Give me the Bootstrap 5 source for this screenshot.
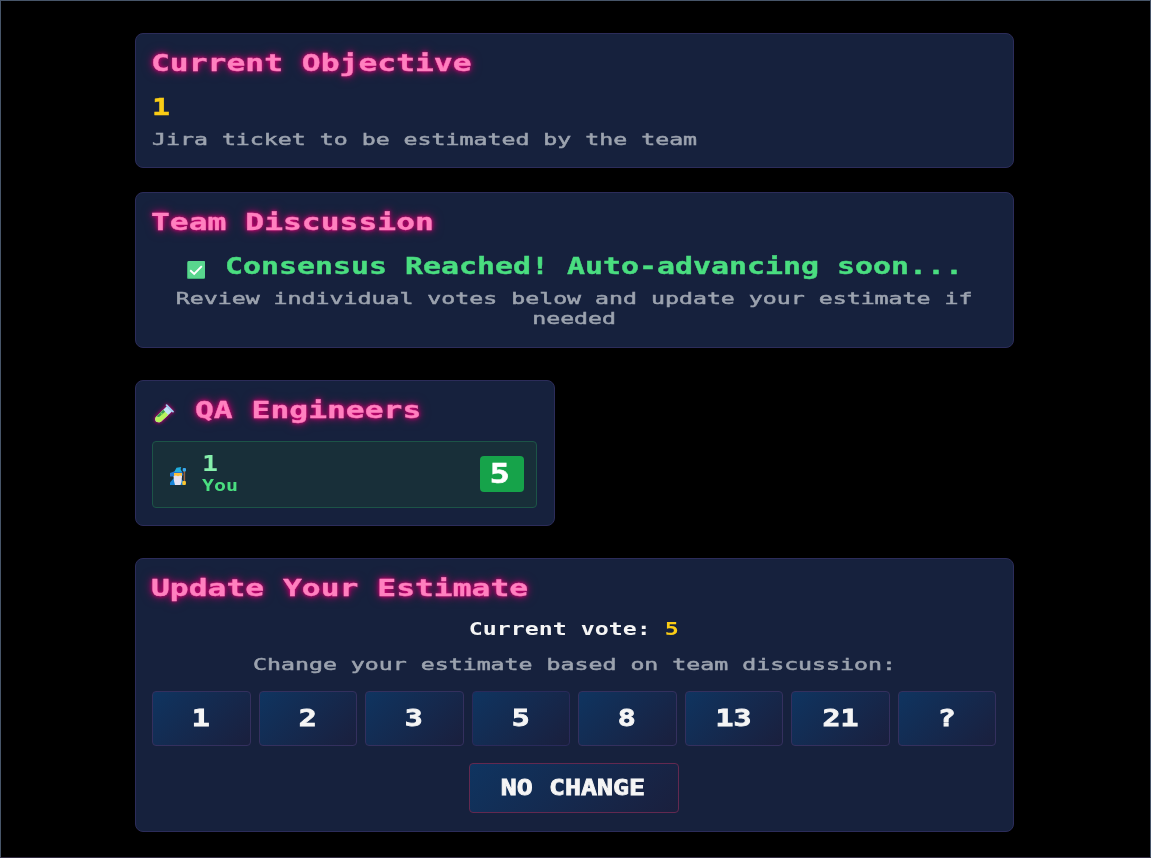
<!DOCTYPE html>
<html lang="en">
<head>
<meta charset="utf-8">
<meta name="viewport" content="width=device-width, initial-scale=1">
<title>Team Discussion</title>
<link href="https://cdn.jsdelivr.net/npm/bootstrap@5.3.0/dist/css/bootstrap.min.css" rel="stylesheet">
<style>
body{background:#000;color:#f5f5f5;font-family:"DejaVu Sans Mono",monospace;overflow:hidden}
.screen{height:858px;border:1px solid #475569;border-bottom-color:#332d42;padding:32px 136px 0 134px}
.panel{background:#16213d;border:1px solid #2c2c5a;border-radius:8px;padding:16px 17px 16px 16px;color:#f5f5f5}
.panel-goal{height:135px}
.panel-talk{height:156px}
.panel-qa{height:146px;width:419.5px}
.panel-vote{height:273.5px}
/* wide arcade lettering */
.wide{display:inline-block;white-space:nowrap;transform:scaleX(var(--w));transform-origin:center}
.wide-start{transform-origin:left center}
.glow{font-size:22.5px;line-height:27px;font-weight:700;color:#ff80bf;--w:1.392;-webkit-text-stroke:.3px currentColor;text-shadow:0 0 3px #e6007a,0 0 6px #c4006c,0 0 10px #8c0c5c}
.title-row{display:flex;margin-left:-1px;height:27px}
.big{font-size:22.5px;line-height:26px;font-weight:700;--w:1.329;-webkit-text-stroke:.4px currentColor}
.note{font-size:16.5px;line-height:20px;color:#9ca3af;--w:1.407;-webkit-text-stroke:.5px currentColor}
.vote-line{font-size:17px;line-height:24px;font-weight:700;--w:1.368}
.gold{color:#facc15}
.green{color:#4ade80}
.line{display:flex}
.member{height:67px;margin-top:17px;background:#182f39;border:1px solid #1c5447;border-radius:4px;padding:0 12px 0 17px}
.member-name{font-size:21px;line-height:24px;font-weight:700;color:#86efac;--w:1.266}
.member-you{font-size:15px;line-height:20px;font-weight:700;color:#4ade80;--w:1.33}
.score{width:44px;height:36px;background:#16a34a;border-radius:4px;font-size:26px;font-weight:700;line-height:36px;color:#fff;--w:1.28;-webkit-text-stroke:.6px currentColor;margin-top:-2px}
.score .wide{position:relative;left:-2px}
.pick-grid{display:grid;grid-template-columns:repeat(8,1fr);gap:8px;margin-top:16px}
.btn-pick{--bs-btn-color:#f5f5f5;--bs-btn-hover-color:#fff;background:linear-gradient(135deg,#0f3460,#1a1f3d);border:1px solid #34305e;border-radius:4px;height:55.5px;padding:1px 0 0}
.btn-pick.faded{border-color:#2a2a5a}
.btn-pick .big{-webkit-text-stroke:.8px currentColor}
.btn-pick.btn-keep{height:50.5px;width:210.5px;border-color:#632950;margin-top:16.5px}
.btn-keep .wide{font-size:21px;--w:1.266;position:relative;left:-1px}
</style>
</head>
<body>
<main class="screen">
  <section class="panel panel-goal">
    <div class="title-row"><span class="wide wide-start glow">Current Objective</span></div>
    <div class="line" style="margin-top:17px"><span class="wide wide-start big gold">1</span></div>
    <div class="line" style="margin-top:10px"><span class="wide wide-start note">Jira ticket to be estimated by the team</span></div>
  </section>

  <section class="panel panel-talk mt-4">
    <div class="title-row"><span class="wide wide-start glow">Team Discussion</span></div>
    <div class="line" style="margin-top:17px;padding-left:34px">
      <svg width="20" height="20" viewBox="0 0 20 20" style="margin:7px 19px 0 0" class="flex-shrink-0">
        <rect x="1" y="1" width="18" height="18" rx="1.5" fill="#3fae72"/>
        <rect x="2" y="1" width="17" height="17" rx="1" fill="#59d68e"/>
        <path d="M4.2 10.2 8.2 14 15.8 6.2" fill="none" stroke="#fff" stroke-width="1.9"/>
      </svg>
      <span class="wide wide-start big green">Consensus Reached! Auto-advancing soon...</span>
    </div>
    <div class="text-center" style="margin-top:8.5px"><span class="wide note">Review individual votes below and update your estimate if<br>needed</span></div>
  </section>

  <section class="panel panel-qa" style="margin-top:32px">
    <div class="title-row">
      <svg width="22" height="22" viewBox="0 0 22 22" style="margin:6px 20px 0 2px;filter:drop-shadow(0 0 1.5px #b00068) drop-shadow(0 0 2px #8c0c5c)" class="flex-shrink-0">
        <path d="M13.8 3.2 19 8.4 8.2 18.4Q5 20.4 2.8 18.2 1.2 15.6 3.4 13.4Z" fill="#bfe3f7"/>
        <path d="M10.2 6.8 15.2 12 8.2 18.4Q5 20.4 2.8 18.2 1.2 15.6 3.4 13.4Z" fill="#b8f45c"/>
        <path d="M3.4 13.4 10.2 6.8 12.2 8.8 6 14Z" fill="#3d9b54"/>
        <circle cx="8.6" cy="10.8" r="1" fill="#7fd65a"/>
        <path d="M13.6 2.2 20 8.6" stroke="#9fd3f5" stroke-width="1.7" stroke-linecap="round"/>
      </svg>
      <span class="wide wide-start glow">QA Engineers</span>
    </div>
    <div class="member d-flex align-items-center">
      <svg width="16" height="19" viewBox="0 0 16 19" style="margin-top:3px" class="flex-shrink-0">
        <path d="M0 18V15.5L3.5 11.5H11L13 14V18Z" fill="#1684d8"/>
        <path d="M0 9.5V6L4 4.5H12L13.5 8 11 9.5H2Z" fill="#2177d2"/>
        <path d="M4.2 5 6.5 .8 11.2 0 10.6 2.2 12 5Z" fill="#20aede"/>
        <rect x="4" y="6" width="8" height="4.5" fill="#fbbf3c"/>
        <path d="M3.5 9 6 8.5 8 9.2 10 8.5 12 9 11.5 15 10.5 18H5L4 14Z" fill="#e5e2f2"/>
        <path d="M14.4 2V18" stroke="#9a633f" stroke-width="1.5"/>
        <rect x="12.7" y="1" width="3.3" height="3.4" rx="1" fill="#3aa9ee"/>
        <rect x="12.3" y="14" width="3.6" height="4" rx="1" fill="#fdc72f"/>
      </svg>
      <div class="d-flex flex-column align-items-start" style="margin:-1px 0 0 16px">
        <span class="wide wide-start member-name">1</span>
        <span class="wide wide-start member-you">You</span>
      </div>
      <div class="score text-center ms-auto"><span class="wide">5</span></div>
    </div>
  </section>

  <section class="panel panel-vote" style="margin-top:32px">
    <div class="title-row"><span class="wide wide-start glow">Update Your Estimate</span></div>
    <div class="line justify-content-center" style="margin-top:15px"><span class="wide vote-line">Current vote: <span class="gold">5</span></span></div>
    <div class="line justify-content-center" style="margin-top:13.6px"><span class="wide note">Change your estimate based on team discussion:</span></div>
    <div class="pick-grid">
      <button class="btn btn-pick"><span class="wide big">1</span></button>
      <button class="btn btn-pick"><span class="wide big">2</span></button>
      <button class="btn btn-pick"><span class="wide big">3</span></button>
      <button class="btn btn-pick faded"><span class="wide big">5</span></button>
      <button class="btn btn-pick"><span class="wide big">8</span></button>
      <button class="btn btn-pick"><span class="wide big">13</span></button>
      <button class="btn btn-pick"><span class="wide big">21</span></button>
      <button class="btn btn-pick"><span class="wide big">?</span></button>
    </div>
    <div class="line justify-content-center"><button class="btn btn-pick btn-keep"><span class="wide big">NO CHANGE</span></button></div>
  </section>
</main>
<script src="https://cdn.jsdelivr.net/npm/bootstrap@5.3.0/dist/js/bootstrap.bundle.min.js"></script>
</body>
</html>
